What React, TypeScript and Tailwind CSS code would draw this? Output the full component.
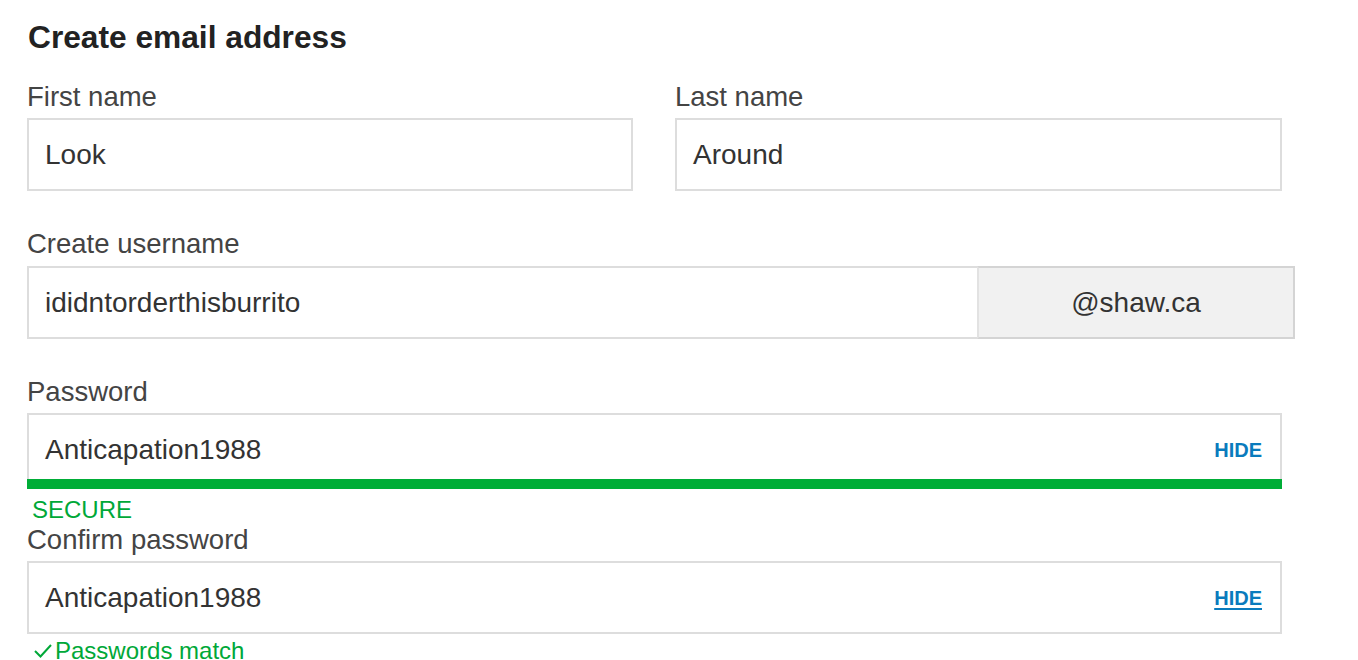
import React from 'react';

const font = { fontFamily: '"Liberation Sans", Arial, Helvetica, sans-serif' };

function Label({ children }: { children: React.ReactNode }) {
  return <div className="text-[27.5px] leading-[32px] text-[#444] mb-[5px]">{children}</div>;
}

function TextBox({ value, right }: { value: string; right?: React.ReactNode }) {
  return (
    <div className="h-[73px] border-2 border-[#dddddd] bg-white flex items-center pl-[16px] pr-[18px] pt-px">
      <span className="flex-1 text-[28px] text-[#333]">{value}</span>
      {right}
    </div>
  );
}

function Hide({ underline }: { underline?: boolean }) {
  return (
    <button
      type="button"
      className={
        'text-[20px] font-bold text-[#0a7bbd] leading-none ' +
        (underline ? 'underline decoration-2 underline-offset-[3px]' : '')
      }
    >
      HIDE
    </button>
  );
}

export default function App() {
  return (
    <div style={font} className="min-h-screen bg-white pl-[27px] pt-[19px] overflow-hidden">
      <h1 className="text-[31.7px] leading-[36px] font-bold text-[#222] pl-px mb-[26px]">Create email address</h1>

      <div className="grid grid-cols-[606px_607px] gap-x-[42px]">
        <div>
          <Label>First name</Label>
          <TextBox value="Look" />
        </div>
        <div>
          <Label>Last name</Label>
          <TextBox value="Around" />
        </div>
      </div>

      <div className="mt-[37px]">
        <Label>Create username</Label>
        <div className="flex w-[1268px] h-[74px] pt-px">
          <div className="w-[950px] border-2 border-r-0 border-[#dddddd] flex items-center pl-[16px] text-[28px] text-[#333]">
            ididntorderthisburrito
          </div>
          <div className="flex-1 border-2 border-[#d4d4d4] border-l-[#e2e2e2] bg-[#f1f1f1] flex items-center justify-center text-[28px] text-[#333]">
            @shaw.ca
          </div>
        </div>
      </div>

      <div className="mt-[37px] w-[1255px]">
        <Label>Password</Label>
        <TextBox value="Anticapation1988" right={<Hide />} />
        <div className="relative -mt-[7px] h-[10px] bg-[#00ad37]" />
        <div className="mt-[7px] pl-[5px] text-[24px] leading-[28px] text-[#00a838]">SECURE</div>
      </div>

      <div className="w-[1255px]">
        <Label>Confirm password</Label>
        <TextBox value="Anticapation1988" right={<Hide underline />} />
        <div className="mt-[3px] flex items-center pl-[6px] text-[24px] leading-[28px] text-[#00a838]">
          <svg width="20" height="16" viewBox="0 0 20 16" className="mr-[2px]">
            <polyline points="2,8 7.5,13.5 18,2" fill="none" stroke="#00a838" strokeWidth="2" />
          </svg>
          Passwords match
        </div>
      </div>
    </div>
  );
}
